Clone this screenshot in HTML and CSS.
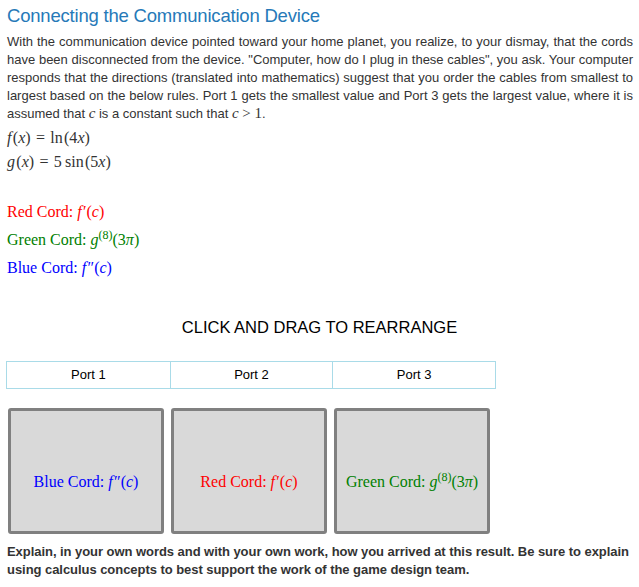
FILE: index.html
```html
<!DOCTYPE html>
<html lang="en">
<head>
    <meta charset="UTF-8">
    <title>Connecting the Communication Device</title>
    <link rel="stylesheet" href="styles.css">
</head>
<body>
    <div class="page">
        <h1 class="title">Connecting the Communication Device</h1>
        <p class="intro">With the communication device pointed toward your home planet, you realize, to your dismay, that the cords have been disconnected from the device. "Computer, how do I plug in these cables", you ask. Your computer responds that the directions (translated into mathematics) suggest that you order the cables from smallest to largest based on the below rules. Port 1 gets the smallest value and Port 3 gets the largest value, where it is assumed that <span class="math"><i>c</i></span> is a constant such that <span class="math"><i>c</i> &gt; 1</span>.</p>

        <div class="math rule"><i>f</i>&#8202;(<i>x</i>)&#8196;=&#8196;ln&#8202;(4<i>x</i>)</div>
        <div class="math rule"><i>g</i>&#8202;(<i>x</i>)&#8196;=&#8196;5&#8201;sin&#8202;(5<i>x</i>)</div>

        <div class="cords">
            <div class="cord red">Red Cord: <i>f</i>&#8202;&#8242;(<i>c</i>)</div>
            <div class="cord green">Green Cord: <i>g</i><sup>(8)</sup>(3<i>π</i>)</div>
            <div class="cord blue">Blue Cord: <i>f</i>&#8202;&#8243;(<i>c</i>)</div>
        </div>

        <div class="hint">CLICK AND DRAG TO REARRANGE</div>

        <div class="ports">
            <div class="port">Port 1</div>
            <div class="port">Port 2</div>
            <div class="port">Port 3</div>
        </div>

        <div class="slots">
            <div class="slot"><span class="cord blue">Blue Cord: <i>f</i>&#8202;&#8243;(<i>c</i>)</span></div>
            <div class="slot"><span class="cord red">Red Cord: <i>f</i>&#8202;&#8242;(<i>c</i>)</span></div>
            <div class="slot"><span class="cord green">Green Cord: <i>g</i><sup>(8)</sup>(3<i>π</i>)</span></div>
        </div>

        <p class="question">Explain, in your own words and with your own work, how you arrived at this result. Be sure to explain using calculus concepts to best support the work of the game design team.</p>
    </div>
</body>
</html>
```

FILE: styles.css
```css
body {
    margin: 0;
    font-family: "Liberation Sans", Arial, sans-serif;
    color: #333;
    background-color: #fff;
}

.page {
    padding: 5px 6px 0 7px;
}

.title {
    margin: 0;
    font-size: 18.5px;
    font-weight: normal;
    letter-spacing: -0.2px;
    line-height: 22px;
    color: #2679b8; /* heading blue */
}

.intro {
    margin: 6px 0 0;
    font-size: 13px;
    line-height: 18px;
    text-align: justify;
}

.math {
    font-family: "Liberation Serif", "DejaVu Serif", serif;
    font-size: 16px;
}

.intro .math {
    font-size: 15px;
    line-height: 1;
}

.rule {
    margin-top: 6px;
    line-height: 18px;
}

.cords {
    margin-top: 32px;
}

.cord {
    font-family: "Liberation Serif", "DejaVu Serif", serif;
    font-size: 16px;
    line-height: 18px;
}

.cords .cord + .cord {
    margin-top: 10px;
}

.cord sup {
    font-size: 12px;
    line-height: 0;
    vertical-align: 6px;
}

.red { color: #ff0000; }
.green { color: #008000; }
.blue { color: #0000ff; }

.hint {
    margin-top: 41px;
    margin-left: -7px;
    margin-right: -6px;
    text-align: center;
    font-size: 16.5px;
    line-height: 18px;
    color: #000;
}

.ports {
    display: grid;
    grid-template-columns: repeat(3, 1fr);
    width: 488px;
    margin: 25px 0 0 -1px;
    border: 1px solid #a9dbe8;
}

.port {
    height: 26px;
    line-height: 26px;
    text-align: center;
    font-size: 13px;
    color: #000;
}

.port + .port {
    border-left: 1px solid #a9dbe8;
}

.slots {
    display: flex;
    gap: 7px;
    margin: 19px 0 0 1px;
}

/* cords sit a little below the middle of each slot */
.slot {
    display: flex;
    align-items: center;
    justify-content: center;
    box-sizing: border-box;
    width: 156px;
    height: 126px;
    padding-top: 22px;
    border: 3px solid #808080;
    border-radius: 3px;
    background-color: #d9d9d9;
}

.question {
    margin: 9px 0 0;
    font-size: 13px;
    font-weight: bold;
    letter-spacing: -0.05px;
    line-height: 18px;
}
```
